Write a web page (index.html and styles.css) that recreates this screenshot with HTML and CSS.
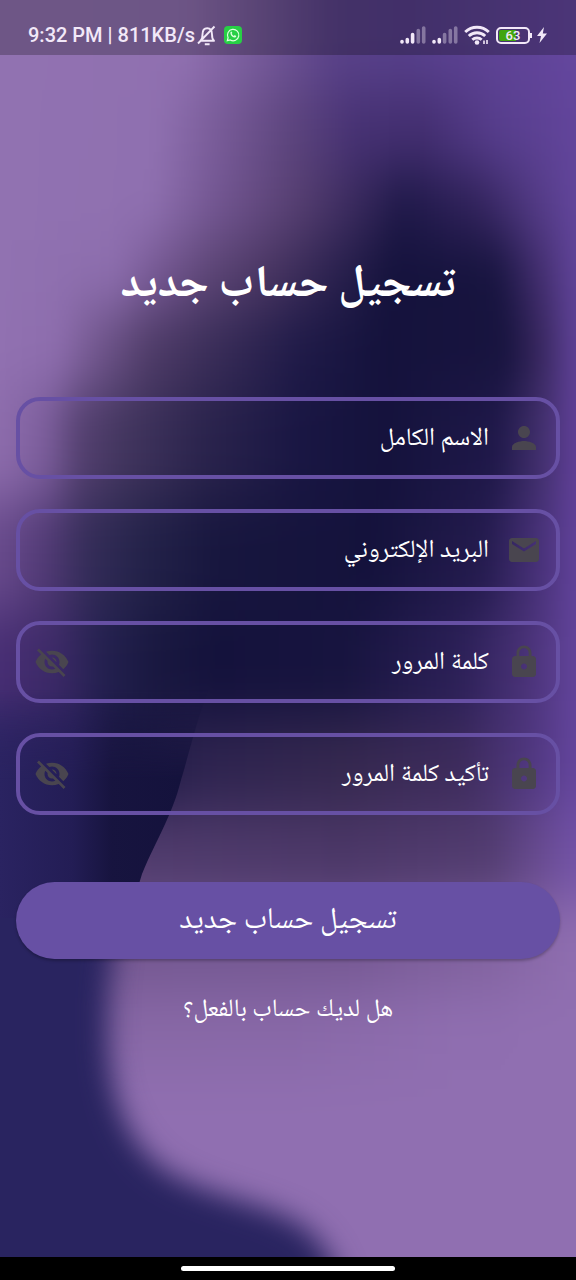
FILE: index.html
```
<!DOCTYPE html>
<html lang="ar" dir="rtl">
<head>
<meta charset="utf-8">
<meta name="viewport" content="width=device-width, initial-scale=1">
<title>تسجيل حساب جديد</title>
<link rel="stylesheet" href="styles.css">
</head>
<body>
<div class="screen">
  <svg class="backdrop" viewBox="0 0 576 1280" preserveAspectRatio="none" aria-hidden="true">
    <defs>
      <linearGradient id="g1" gradientUnits="userSpaceOnUse" x1="0" x2="576"><stop offset="0" stop-color="#9172b1"/><stop offset=".32" stop-color="#9070b0"/><stop offset=".45" stop-color="#765a9a"/><stop offset=".58" stop-color="#5a4289"/><stop offset=".7" stop-color="#563f8a"/><stop offset="1" stop-color="#64469e"/></linearGradient>
      <linearGradient id="g2" gradientUnits="userSpaceOnUse" x1="0" x2="576"><stop offset="0" stop-color="#9172b1"/><stop offset=".27" stop-color="#8f70b0"/><stop offset=".38" stop-color="#785b98"/><stop offset=".5" stop-color="#5d457e"/><stop offset=".62" stop-color="#463173"/><stop offset=".73" stop-color="#432e70"/><stop offset=".86" stop-color="#563d8c"/><stop offset="1" stop-color="#62459b"/></linearGradient>
      <linearGradient id="g3" gradientUnits="userSpaceOnUse" x1="0" x2="576"><stop offset="0" stop-color="#9172b1"/><stop offset=".26" stop-color="#8f70b0"/><stop offset=".37" stop-color="#745793"/><stop offset=".52" stop-color="#553e70"/><stop offset=".61" stop-color="#3b2b5e"/><stop offset=".7" stop-color="#1e1848"/><stop offset=".83" stop-color="#32235c"/><stop offset=".93" stop-color="#523a84"/><stop offset="1" stop-color="#62459b"/></linearGradient>
      <linearGradient id="g4" gradientUnits="userSpaceOnUse" x1="0" x2="576"><stop offset="0" stop-color="#9172b1"/><stop offset=".2" stop-color="#8c6dad"/><stop offset=".28" stop-color="#735690"/><stop offset=".36" stop-color="#5d4676"/><stop offset=".47" stop-color="#473460"/><stop offset=".58" stop-color="#2a214e"/><stop offset=".68" stop-color="#14123c"/><stop offset=".86" stop-color="#17143f"/><stop offset=".94" stop-color="#432e6f"/><stop offset="1" stop-color="#604499"/></linearGradient>
      <linearGradient id="g5" gradientUnits="userSpaceOnUse" x1="0" x2="576"><stop offset="0" stop-color="#9171b1"/><stop offset=".1" stop-color="#8d6dad"/><stop offset=".17" stop-color="#71568d"/><stop offset=".26" stop-color="#4f3c68"/><stop offset=".36" stop-color="#3b2e59"/><stop offset=".52" stop-color="#1f1a48"/><stop offset=".66" stop-color="#14123c"/><stop offset=".88" stop-color="#18143f"/><stop offset=".94" stop-color="#38275f"/><stop offset="1" stop-color="#5f4297"/></linearGradient>
      <linearGradient id="g6" gradientUnits="userSpaceOnUse" x1="0" x2="576"><stop offset="0" stop-color="#8d6cac"/><stop offset=".08" stop-color="#7b5d9b"/><stop offset=".14" stop-color="#544070"/><stop offset=".21" stop-color="#43365f"/><stop offset=".35" stop-color="#2b244d"/><stop offset=".52" stop-color="#191643"/><stop offset=".67" stop-color="#14123c"/><stop offset=".86" stop-color="#1f1849"/><stop offset=".94" stop-color="#42306d"/><stop offset="1" stop-color="#603f98"/></linearGradient>
      <linearGradient id="g7" gradientUnits="userSpaceOnUse" x1="0" x2="576"><stop offset="0" stop-color="#684a8c"/><stop offset=".08" stop-color="#513a75"/><stop offset=".15" stop-color="#352d59"/><stop offset=".25" stop-color="#232249"/><stop offset=".38" stop-color="#17163e"/><stop offset=".65" stop-color="#14123c"/><stop offset=".84" stop-color="#241b4e"/><stop offset=".94" stop-color="#49327a"/><stop offset="1" stop-color="#61429a"/></linearGradient>
      <linearGradient id="g8" gradientUnits="userSpaceOnUse" x1="0" x2="576"><stop offset="0" stop-color="#482e74"/><stop offset=".1" stop-color="#3b2966"/><stop offset=".18" stop-color="#23204f"/><stop offset=".27" stop-color="#191840"/><stop offset=".37" stop-color="#14123c"/><stop offset=".6" stop-color="#17143f"/><stop offset=".8" stop-color="#2c2058"/><stop offset=".92" stop-color="#4b3379"/><stop offset="1" stop-color="#62449b"/></linearGradient>
      <linearGradient id="g9" gradientUnits="userSpaceOnUse" x1="0" x2="576"><stop offset="0" stop-color="#2d2464"/><stop offset=".12" stop-color="#2a205c"/><stop offset=".22" stop-color="#1b1844"/><stop offset=".35" stop-color="#2d234f"/><stop offset=".6" stop-color="#35284f"/><stop offset=".8" stop-color="#3d2b5c"/><stop offset=".93" stop-color="#513882"/><stop offset="1" stop-color="#64459d"/></linearGradient>
      <linearGradient id="g10" gradientUnits="userSpaceOnUse" x1="0" x2="576"><stop offset="0" stop-color="#533e70"/><stop offset=".6" stop-color="#4b3767"/><stop offset=".85" stop-color="#523c70"/><stop offset=".94" stop-color="#684b91"/><stop offset="1" stop-color="#7252a7"/></linearGradient>
      <linearGradient id="g11" gradientUnits="userSpaceOnUse" x1="0" x2="576"><stop offset="0" stop-color="#735790"/><stop offset=".6" stop-color="#755893"/><stop offset=".85" stop-color="#8263a0"/><stop offset="1" stop-color="#8f6eb0"/></linearGradient>
      <linearGradient id="g12" gradientUnits="userSpaceOnUse" x1="0" x2="576"><stop offset="0" stop-color="#8767a5"/><stop offset=".5" stop-color="#8868a7"/><stop offset=".8" stop-color="#8f6eb0"/><stop offset="1" stop-color="#906fb1"/></linearGradient>
      <linearGradient id="navy" gradientUnits="userSpaceOnUse" x1="0" x2="180"><stop offset="0" stop-color="#2a2361"/><stop offset=".4" stop-color="#231d55"/><stop offset=".62" stop-color="#17143f"/><stop offset="1" stop-color="#14123c"/></linearGradient>
      <linearGradient id="fadeDown" gradientUnits="userSpaceOnUse" x1="0" y1="690" x2="0" y2="780"><stop offset="0" stop-color="#000"/><stop offset="1" stop-color="#fff"/></linearGradient>
      <mask id="upperMask" maskUnits="userSpaceOnUse" x="0" y="680" width="576" height="240"><rect y="680" width="576" height="240" fill="url(#fadeDown)"/></mask>
      <clipPath id="lowerClip"><rect y="918" width="576" height="362"/></clipPath>
      <filter id="meshBlur" filterUnits="userSpaceOnUse" x="-60" y="-100" width="696" height="1480" color-interpolation-filters="sRGB"><feGaussianBlur stdDeviation="10 28"/></filter>
      <filter id="softEdge" filterUnits="userSpaceOnUse" x="-100" y="800" width="776" height="600" color-interpolation-filters="sRGB"><feGaussianBlur stdDeviation="14"/></filter>
    </defs>
    <g filter="url(#meshBlur)">
      <rect x="-60" y="-100" width="696" height="190" fill="url(#g1)"/>
      <rect x="-60" y="90" width="696" height="80" fill="url(#g2)"/>
      <rect x="-60" y="170" width="696" height="70" fill="url(#g3)"/>
      <rect x="-60" y="240" width="696" height="70" fill="url(#g4)"/>
      <rect x="-60" y="310" width="696" height="80" fill="url(#g5)"/>
      <rect x="-60" y="390" width="696" height="110" fill="url(#g6)"/>
      <rect x="-60" y="500" width="696" height="110" fill="url(#g7)"/>
      <rect x="-60" y="610" width="696" height="110" fill="url(#g8)"/>
      <rect x="-60" y="720" width="696" height="90" fill="url(#g9)"/>
      <rect x="-60" y="810" width="696" height="90" fill="url(#g10)"/>
      <rect x="-60" y="900" width="696" height="90" fill="url(#g11)"/>
      <rect x="-60" y="990" width="696" height="80" fill="url(#g12)"/>
      <rect x="-60" y="1070" width="696" height="310" fill="#906fb1"/>
    </g>
    <path mask="url(#upperMask)" fill="url(#navy)" d="M0 680H212C198 715 190 750 181 780C172 816 157 838 142 874L128 920H0Z"/>
    <g clip-path="url(#lowerClip)">
      <path filter="url(#softEdge)" fill="#292460" d="M-90 830H140C118 910 107 970 108 1030C108 1090 124 1140 162 1168C200 1194 250 1200 288 1218C325 1236 345 1268 362 1380H-90Z"/>
    </g>
  </svg>

  <header class="status" dir="ltr">
    <div class="status-group">
      <span>9:32 PM | 811KB/s</span>
      <svg class="bell" viewBox="0 0 22 22" aria-hidden="true"><path d="M4.500 16.800c1.600-1.300 2-2.700 2-6.300 0-4 1.800-6.200 4.700-6.200s4.800 2.200 4.800 6.200c0 3.600.4 5 2 6.300zM2 19.500 18.500 2.500M8.800 20.200h4.800" fill="none" stroke="currentColor" stroke-width="1.900" stroke-linejoin="round"/></svg>
      <svg class="chat" viewBox="0 0 18 18" aria-hidden="true"><rect width="18" height="18" rx="4" fill="#27d045"/><path d="M3.300 14.700l.8-3A5.700 5.700 0 1 1 6.300 14z" fill="none" stroke="#dfffe0" stroke-width="1.200"/><path d="M6.500 6c.5-.8 1.200-.6 1.400 0l.4 1-.6.8c.5 1 1.200 1.600 2.200 2.100l.8-.8 1.500.8c.3.8-.8 1.700-1.700 1.600C8 11.200 6 8.700 6.500 6z" fill="#dfffe0"/></svg>
    </div>
    <div class="status-group">
      <svg class="signal" viewBox="0 0 26 18" aria-hidden="true"><g stroke="currentColor" stroke-width="3.600" stroke-linecap="round"><path d="M2 16v-.5M7.300 16v-2.500M12.600 16V8.500"/><path opacity=".38" d="M18.300 16V4.500M23.700 16V2"/></g></svg>
      <svg class="signal" viewBox="0 0 26 18" aria-hidden="true"><g stroke="currentColor" stroke-width="3.600" stroke-linecap="round"><path d="M2 16v-.5M7.300 16v-2.500"/><path opacity=".38" d="M12.600 16V8.500M18.300 16V4.500M23.700 16V2"/></g></svg>
      <svg class="wifi" viewBox="0 0 26 20" aria-hidden="true"><g fill="none" stroke="currentColor" stroke-width="2.900"><path d="M1.200 7a17 17 0 0 1 23.600 0M4.800 11a12 12 0 0 1 16.400 0M8.300 14.800a7 7 0 0 1 9.400 0"/></g><circle cx="13" cy="17.500" r="2.300" fill="currentColor"/><path d="M20 15.500v3.500M23 15v4" stroke="currentColor" stroke-width="1.600"/></svg>
      <span class="battery"><span class="battery-text">63</span></span>
      <svg class="bolt" viewBox="0 0 12 16" aria-hidden="true"><path d="M8 0 1 9h4l-1.500 7L11 6.500H6.800z" fill="currentColor"/></svg>
    </div>
  </header>

  <main class="content">
    <h1 class="title">تسجيل حساب جديد</h1>
    <form class="form">
      <div class="field">
        <svg class="icon" viewBox="0 0 24 24" aria-hidden="true"><path d="M12 12c2.210 0 4-1.790 4-4s-1.790-4-4-4-4 1.790-4 4 1.790 4 4 4zm0 2c-2.670 0-8 1.340-8 4v2h16v-2c0-2.660-5.330-4-8-4z"/></svg>
        <input class="input" type="text" aria-label="الاسم الكامل" placeholder="الاسم الكامل">
      </div>
      <div class="field">
        <svg class="icon" viewBox="0 0 24 24" aria-hidden="true"><path d="M20 4H4c-1.100 0-1.990.9-1.990 2L2 18c0 1.100.9 2 2 2h16c1.100 0 2-.9 2-2V6c0-1.100-.9-2-2-2zm0 4-8 5-8-5V6l8 5 8-5v2z"/></svg>
        <input class="input" type="email" aria-label="البريد الإلكتروني" placeholder="البريد الإلكتروني">
      </div>
      <div class="field">
        <svg class="icon" viewBox="0 0 24 24" aria-hidden="true"><path d="M18 8h-1V6c0-2.760-2.240-5-5-5S7 3.240 7 6v2H6c-1.100 0-2 .9-2 2v10c0 1.100.9 2 2 2h12c1.100 0 2-.9 2-2V10c0-1.100-.9-2-2-2zm-6 9c-1.100 0-2-.9-2-2s.9-2 2-2 2 .9 2 2-.9 2-2 2zm3.100-9H8.900V6c0-1.710 1.390-3.100 3.100-3.100s3.100 1.390 3.100 3.100v2z"/></svg>
        <input class="input" type="password" aria-label="كلمة المرور" placeholder="كلمة المرور">
        <button class="reveal" type="button" aria-label="إظهار كلمة المرور"><svg class="icon" viewBox="0 0 24 24" aria-hidden="true"><path d="M12 7c2.760 0 5 2.240 5 5 0 .65-.13 1.260-.36 1.830l2.920 2.920c1.510-1.260 2.700-2.890 3.430-4.750-1.730-4.390-6-7.500-11-7.500-1.400 0-2.740.25-3.980.7l2.160 2.160C10.740 7.130 11.350 7 12 7zM2 4.270l2.280 2.280.46.46C3.080 8.300 1.780 10.020 1 12c1.730 4.390 6 7.500 11 7.500 1.550 0 3.030-.3 4.380-.84l.42.42L19.730 22 21 20.730 3.270 3 2 4.270zM7.530 9.800l1.550 1.550c-.05.21-.08.43-.08.65 0 1.660 1.340 3 3 3 .22 0 .44-.03.65-.08l1.550 1.550c-.67.33-1.410.53-2.200.53-2.760 0-5-2.240-5-5 0-.79.2-1.530.53-2.200zm4.310-.78 3.150 3.150.02-.16c0-1.660-1.340-3-3-3l-.17.01z"/></svg></button>
      </div>
      <div class="field">
        <svg class="icon" viewBox="0 0 24 24" aria-hidden="true"><path d="M18 8h-1V6c0-2.760-2.240-5-5-5S7 3.240 7 6v2H6c-1.100 0-2 .9-2 2v10c0 1.100.9 2 2 2h12c1.100 0 2-.9 2-2V10c0-1.100-.9-2-2-2zm-6 9c-1.100 0-2-.9-2-2s.9-2 2-2 2 .9 2 2-.9 2-2 2zm3.100-9H8.900V6c0-1.710 1.390-3.100 3.100-3.100s3.100 1.390 3.100 3.100v2z"/></svg>
        <input class="input" type="password" aria-label="تأكيد كلمة المرور" placeholder="تأكيد كلمة المرور">
        <button class="reveal" type="button" aria-label="إظهار كلمة المرور"><svg class="icon" viewBox="0 0 24 24" aria-hidden="true"><path d="M12 7c2.760 0 5 2.240 5 5 0 .65-.13 1.260-.36 1.830l2.920 2.920c1.510-1.260 2.700-2.890 3.430-4.750-1.730-4.390-6-7.500-11-7.500-1.400 0-2.740.25-3.980.7l2.160 2.160C10.740 7.130 11.350 7 12 7zM2 4.270l2.280 2.280.46.46C3.080 8.300 1.780 10.020 1 12c1.730 4.390 6 7.500 11 7.500 1.550 0 3.030-.3 4.380-.84l.42.42L19.730 22 21 20.730 3.270 3 2 4.270zM7.530 9.800l1.550 1.550c-.05.21-.08.43-.08.65 0 1.660 1.340 3 3 3 .22 0 .44-.03.65-.08l1.550 1.550c-.67.33-1.410.53-2.200.53-2.760 0-5-2.240-5-5 0-.79.2-1.530.53-2.200zm4.310-.78 3.150 3.150.02-.16c0-1.660-1.340-3-3-3l-.17.01z"/></svg></button>
      </div>
      <button class="submit" type="submit">تسجيل حساب جديد</button>
    </form>
    <a class="login-link" href="#">هل لديك حساب بالفعل؟</a>
  </main>

  <footer class="nav-bar"><span class="nav-pill"></span></footer>
</div>
</body>
</html>
```
FILE: styles.css
```
* {
  box-sizing: border-box;
}

body {
  margin: 0;
  font-family: "Noto Naskh Arabic UI", "Noto Naskh Arabic", "DejaVu Sans", sans-serif;
  color: #fff;
}

.screen {
  position: relative;
  isolation: isolate;
  display: flex;
  flex-direction: column;
  min-height: 100vh;
  background: #906fb1;
  overflow: hidden;
}

.backdrop {
  position: absolute;
  inset: 0;
  z-index: -1;
  width: 100%;
  height: 100%;
}

.status {
  display: flex;
  align-items: flex-end;
  justify-content: space-between;
  height: 55px;
  padding: 0 28px 8px;
  background: rgba(0, 0, 0, 0.24);
  color: #f2e8f8;
  font: 500 20px/24px Roboto, sans-serif;
}

.status-group {
  display: flex;
  align-items: center;
  gap: 6px;
  height: 24px;
}

.bell {
  width: 22px;
  height: 22px;
  margin-left: -5px;
}

.chat {
  width: 18px;
  height: 18px;
}

.signal {
  width: 26px;
  height: 18px;
}

.wifi {
  width: 26px;
  height: 20px;
}

.battery {
  position: relative;
  display: grid;
  place-items: center;
  width: 34px;
  height: 17px;
  border: 2px solid #f2e8f8;
  border-radius: 5px;
  background: linear-gradient(to right, #41a510 60%, transparent 60%) content-box;
  padding: 1px;
}

.battery::after {
  content: "";
  position: absolute;
  right: -4px;
  top: 4px;
  width: 2px;
  height: 5px;
  background: #f2e8f8;
}

.battery-text {
  font-size: 13px;
  font-weight: 500;
  line-height: 12px;
}

.bolt {
  width: 12px;
  height: 16px;
}

.content {
  flex: 1;
  display: flex;
  flex-direction: column;
  align-items: center;
  padding: 200px 16px 0;
}

.title {
  margin: 0 0 82px;
  font-size: 45px;
  line-height: 60px;
  font-weight: 700;
}

.form {
  display: flex;
  flex-direction: column;
  gap: 30px;
  width: 100%;
}

.field {
  display: flex;
  align-items: center;
  gap: 17px;
  height: 82px;
  padding: 0 14px;
  border: 4px solid #6750a4;
  border-radius: 24px;
}

.icon {
  display: block;
  flex: none;
  width: 36px;
  height: 36px;
  fill: #49454f;
}

.input {
  flex: 1;
  min-width: 0;
  height: 100%;
  padding: 0;
  border: 0;
  outline: 0;
  background: transparent;
  color: #fff;
  font: inherit;
  font-size: 25px;
}

.input::placeholder {
  color: #fff;
  opacity: 1;
}

.reveal {
  padding: 0;
  border: 0;
  background: none;
}

.submit {
  height: 77px;
  margin-top: 37px;
  border: 0;
  border-radius: 40px;
  background: #6750a4;
  box-shadow: 0 2px 3px rgba(0, 0, 0, 0.25);
  color: #fff;
  font: inherit;
  font-size: 30px;
}

.login-link {
  margin-top: 32px;
  color: #fff;
  font-size: 25px;
  line-height: 36px;
  text-decoration: none;
}

.nav-bar {
  display: grid;
  place-items: center;
  height: 23px;
  background: #000;
}

.nav-pill {
  width: 37%;
  height: 5px;
  border-radius: 3px;
  background: #fff;
}
```
